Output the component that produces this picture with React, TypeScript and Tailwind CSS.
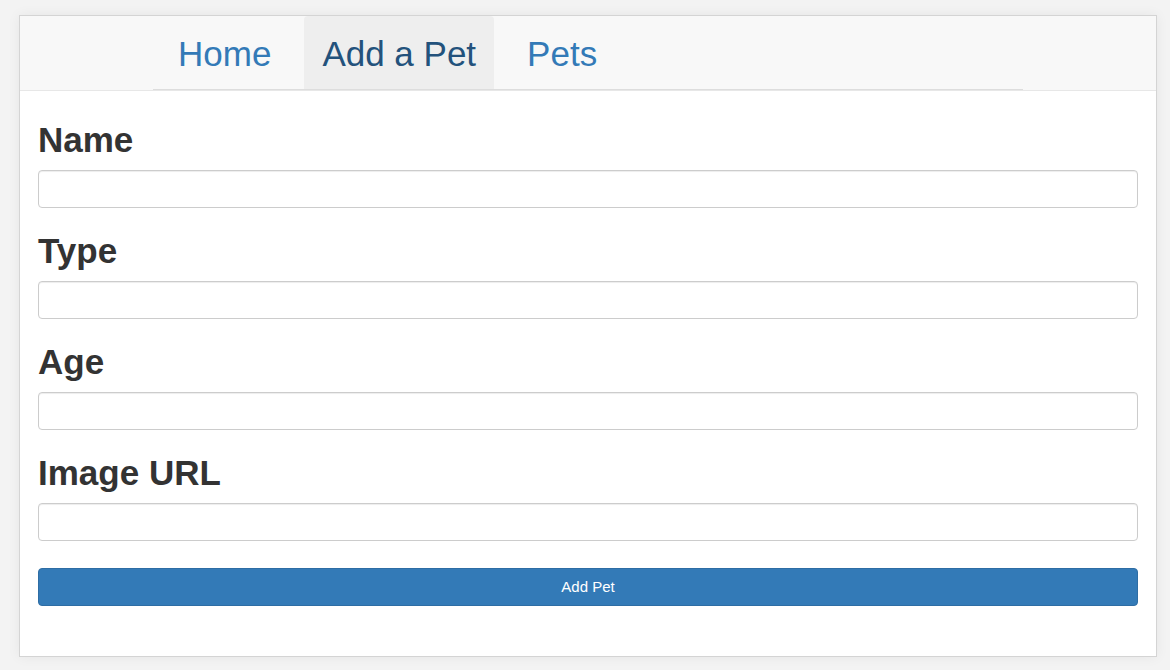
import React from "react";

export default function App() {
  const fields = ["Name", "Type", "Age", "Image URL"];
  return (
    <div
      className="w-[1170px] h-[670px] bg-[#f3f3f3] pt-[15px] pl-[19px]"
      style={{ fontFamily: '"Liberation Sans", Arial, Helvetica, sans-serif' }}
    >
      <div className="w-[1138px] h-[642px] border border-[#d4d4d4] bg-white shadow-[0_0_12px_rgba(0,0,0,0.06)]">
        <div className="h-[75px] bg-[#f8f8f8] border-b border-[#e7e7e7]">
          <ul className="mx-auto w-[870px] h-[74px] border-b border-[#dddddd] flex pl-[7px] gap-[15px]">
            <li className="h-[73px] px-[18px] pt-[3px] flex items-center text-[35px] leading-[40px] text-[#337ab7]">Home</li>
            <li className="h-[73px] px-[18px] pt-[3px] flex items-center text-[35px] leading-[40px] text-[#23527c] bg-[#eeeeee] rounded-t-[4px]">Add a Pet</li>
            <li className="h-[73px] px-[18px] pt-[3px] flex items-center text-[35px] leading-[40px] text-[#337ab7]">Pets</li>
          </ul>
        </div>
        <form className="px-[18px] pt-[29px]">
          {fields.map((f, i) => (
            <div key={f} className={i > 0 ? "mt-[23px]" : ""}>
              <label className="block text-[35px] leading-[40px] font-bold text-[#333333]">{f}</label>
              <input
                type="text"
                className="mt-[10px] block w-full h-[38px] border border-[#cccccc] rounded-[4px] bg-white shadow-[inset_0_1px_1px_rgba(0,0,0,0.075)] outline-none"
              />
            </div>
          ))}
          <button
            type="button"
            className="mt-[27px] block w-full h-[38px] bg-[#337ab7] border border-[#2e6da4] rounded-[4px] text-white text-[15px]"
          >
            Add Pet
          </button>
        </form>
      </div>
    </div>
  );
}
